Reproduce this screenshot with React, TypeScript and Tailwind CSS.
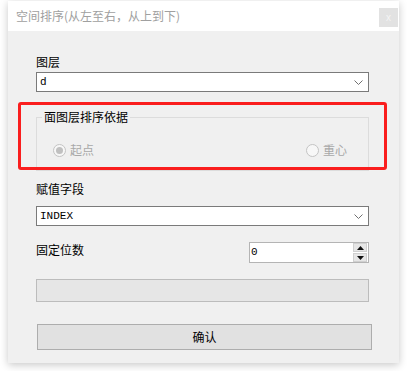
import React from "react";

const cjk = "font-['Noto_Sans_CJK_SC','Noto_Sans',sans-serif]";
const mono = "font-['Liberation_Mono','DejaVu_Sans_Mono',monospace]";

function Chevron() {
  return (
    <svg width="9" height="5" viewBox="0 0 9 5" className="shrink-0">
      <path d="M0.5 0.5 L4.5 4.5 L8.5 0.5" fill="none" stroke="#707070" strokeWidth="1" />
    </svg>
  );
}

function Combo({ value }: { value: string }) {
  return (
    <div className="h-[20px] w-full border border-[#7a7a7a] bg-white flex items-center justify-between pl-[3px] pr-[5px]">
      <span className={`${mono} text-[11px] leading-none text-black`}>{value}</span>
      <Chevron />
    </div>
  );
}

function Radio({ checked, label }: { checked?: boolean; label: string }) {
  return (
    <div className="flex items-center gap-[4px]">
      <div className="w-[13px] h-[13px] rounded-full border border-[#c4c4c4] bg-[#f7f7f7] flex items-center justify-center">
        {checked && <div className="w-[7px] h-[7px] rounded-full bg-[#c0c0c0]" />}
      </div>
      <span className={`${cjk} text-[12px] leading-[14px] text-[#a8a8a8]`}>{label}</span>
    </div>
  );
}

export default function App() {
  return (
    <div className="w-[407px] h-[371px] bg-white pt-[1px] pl-[8px]">
      <div className="relative w-[391px] h-[362px] flex flex-col bg-[#f0f0f0] shadow-[0_2px_8px_rgba(0,0,0,0.22)]">
        {/* title bar */}
        <div className="h-[30px] bg-white flex items-start justify-between pl-[8px] pr-[1px]">
          <span className={`${cjk} text-[12px] leading-[30px] text-[#a0a0a0]`}>
            空间排序(从左至右，从上到下)
          </span>
          <div className="mt-[7px] w-[19px] h-[19px] bg-[#e2e2e2] flex items-center justify-center text-[#f4f4f4] text-[10px] leading-none font-['Liberation_Sans',sans-serif]">
            x
          </div>
        </div>

        {/* body */}
        <div className="flex-1 flex flex-col pl-[28px] pr-[30px] pt-[23px]">
          <div className={`${cjk} h-[16px] text-[12px] leading-[16px] text-black`}>图层</div>
          <div className="mt-[2px]">
            <Combo value="d" />
          </div>

          <div className="relative mt-[25px] h-[54px] border border-[#dcdcdc]">
            <span className={`${cjk} absolute -top-[9px] left-[5px] px-[2px] bg-[#f0f0f0] text-[12px] leading-[16px] text-black`}>
              面图层排序依据
            </span>
            <div className="flex items-center justify-between pl-[16px] pr-[21px] pt-[25px]">
              <Radio checked label="起点" />
              <Radio label="重心" />
            </div>
          </div>

          <div className={`${cjk} mt-[10px] h-[16px] text-[12px] leading-[16px] text-black`}>赋值字段</div>
          <div className="mt-[9px]">
            <Combo value="INDEX" />
          </div>

          <div className="mt-[16px] h-[21px] flex items-center justify-between">
            <span className={`${cjk} -mt-[6px] text-[12px] leading-[16px] text-black`}>固定位数</span>
            <div className="w-[120px] h-[21px] border border-[#b4b4b4] bg-white flex items-center justify-between pl-[1px] pr-[1px]">
              <span className={`${mono} text-[11px] leading-none text-black`}>0</span>
              <div className="w-[14px] h-[19px] flex flex-col gap-[1px]">
                <div className="flex-1 bg-[#e6e6e6] border border-[#d0d0d0] flex items-center justify-center">
                  <svg width="7" height="4" viewBox="0 0 7 4">
                    <path d="M3.5 0 L7 4 L0 4 Z" fill="#111" />
                  </svg>
                </div>
                <div className="flex-1 bg-[#e6e6e6] border border-[#d0d0d0] flex items-center justify-center">
                  <svg width="7" height="4" viewBox="0 0 7 4">
                    <path d="M0 0 L7 0 L3.5 4 Z" fill="#111" />
                  </svg>
                </div>
              </div>
            </div>
          </div>

          <div className="mt-[16px] h-[23px] w-full border border-[#bcbcbc] bg-[#e6e6e6]" />

          <div className="mt-[22px] ml-[1px] w-[335px] h-[26px] border border-[#adadad] bg-[#e1e1e1] flex items-center justify-center">
            <span className={`${cjk} text-[12px] leading-[16px] text-black`}>确认</span>
          </div>
        </div>

        {/* red highlight annotation */}
        <div className="absolute left-[10px] top-[101px] w-[369px] h-[68px] border-[3px] border-[#fa1e1e] rounded-[3px] pointer-events-none" />
      </div>
    </div>
  );
}
